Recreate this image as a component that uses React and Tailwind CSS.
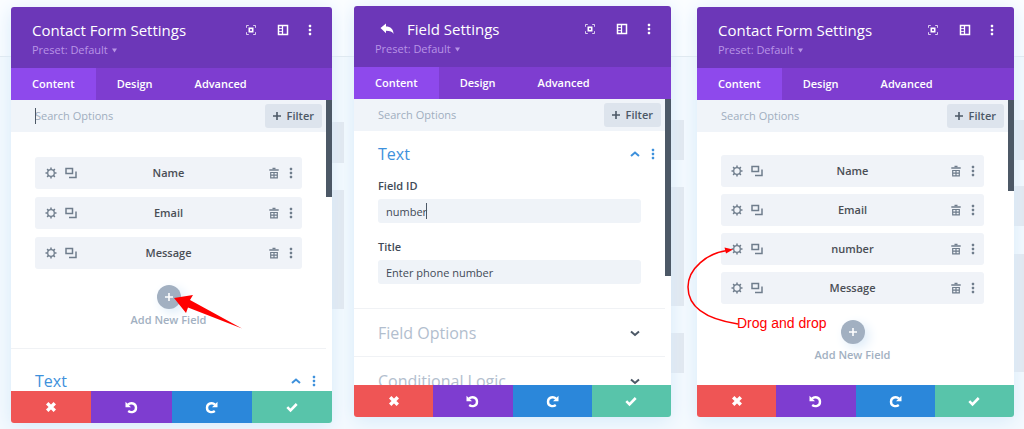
import React, { useState } from 'react';

const Dots = ({ className }) => (
  <svg className={className} viewBox="0 0 12 12" fill="currentColor">
    <rect x="4.800" y="0.800" width="2.400" height="2.400" rx="0.600" />
    <rect x="4.800" y="4.800" width="2.400" height="2.400" rx="0.600" />
    <rect x="4.800" y="8.800" width="2.400" height="2.400" rx="0.600" />
  </svg>
);

const HeaderIcons = () => (
  <div className="flex h-[22px] items-center text-white">
    <button type="button" aria-label="Expand">
      <svg className="w-3 h-3" viewBox="0 0 12 12" fill="none" stroke="currentColor">
        <path d="M1.500 3.800V1.500h2.300M8.200 1.500h2.300v2.300M10.500 8.200v2.300H8.200M3.800 10.500H1.500V8.200" strokeWidth="1" opacity="0.75" />
        <rect x="4.300" y="4.300" width="3.400" height="3.400" strokeWidth="1.600" />
      </svg>
    </button>
    <button type="button" aria-label="Dock" className="ml-5">
      <svg className="w-3 h-3" viewBox="0 0 12 12" fill="none" stroke="currentColor">
        <rect x="1.500" y="1.500" width="9" height="9" strokeWidth="1.500" />
        <path d="M5.500 1.500v9" strokeWidth="1.300" />
        <path d="M1.500 4.500h4M1.500 7.500h4" strokeWidth="0.800" />
      </svg>
    </button>
    <button type="button" aria-label="More" className="ml-[15px]">
      <Dots className="w-3 h-3" />
    </button>
  </div>
);

const Gear = () => (
  <svg className="w-3 h-3" viewBox="0 0 12 12" fill="none" stroke="currentColor">
    <circle cx="6" cy="6" r="3.300" strokeWidth="1.300" />
    <path d="M6 0.500v2M6 9.500v2M0.500 6h2M9.500 6h2M2.100 2.100l1.400 1.400M8.500 8.500l1.400 1.400M9.900 2.100L8.500 3.500M3.500 8.500L2.100 9.900" strokeWidth="1.500" />
  </svg>
);

const Duplicate = () => (
  <svg className="w-3 h-3" viewBox="0 0 12 12" fill="none" stroke="currentColor" strokeWidth="1.500">
    <rect x="1" y="1.500" width="6.500" height="5" />
    <path d="M11 4.500v6H4" />
  </svg>
);

const Trash = () => (
  <svg className="w-3 h-3" viewBox="0 0 12 12" fill="none" stroke="currentColor">
    <path d="M1.300 3h9.400" strokeWidth="1.500" />
    <path d="M4.500 1.500h3" strokeWidth="1.500" />
    <path d="M2.700 5.500h6.600v5.400H2.700zM6 5.500v5.400M2.700 8.200h6.600" strokeWidth="1.200" />
  </svg>
);

const Chevron = ({ up }) => (
  <svg className="w-3 h-3" viewBox="0 0 12 12" fill="none" stroke="currentColor" strokeWidth="2">
    {up ? <path d="M2 8l4-3.500L10 8" /> : <path d="M2 4.500L6 8l4-3.500" />}
  </svg>
);

const Plus = ({ className }) => (
  <svg className={className} viewBox="0 0 8 8" fill="none" stroke="currentColor" strokeWidth="1.600">
    <path d="M4 0v8M0 4h8" />
  </svg>
);

const Turn = ({ className = '' }) => (
  <svg className={`w-[13px] h-[13px] ${className}`} viewBox="0 0 13 13">
    <path d="M3 3.600C5.500 1.300 11 2 11 6.700c0 4.600-5 5.400-7.800 3.300" fill="none" stroke="currentColor" strokeWidth="2.400" />
    <path d="M0.500 0.800l5.500 5.400H0.500z" fill="currentColor" />
  </svg>
);

// Wireframe of the page that lies behind each modal
const Backdrop = ({ blocks }) => (
  <div className="col-start-1 row-start-1 bg-[#f5fafe]" aria-hidden="true">
    <div className="h-[57px] border-b border-[#e2e9ef] bg-[#fbfdff]" />
    {blocks.map(([gap, height], i) => (
      <div key={i} className="ml-auto w-1/2 bg-[#e3e8ef]" style={{ marginTop: gap, height }} />
    ))}
  </div>
);

const Header = ({ title, back }) => (
  <header className="flex h-[61px] justify-between bg-[#6c37b8] pt-3 pr-4 pl-[21px]">
    <div>
      <h2 className="flex h-[22px] items-center text-[15px] font-medium text-white">
        {back && (
          <button type="button" aria-label="Back" className="mr-3 ml-1">
            <svg className="w-4 h-4" viewBox="0 0 16 16" fill="currentColor">
              <path d="M1.500 7L7 2.500v3c4.500 0 7.500 2.500 7.500 7.500-1-2.300-3.500-3.300-7.500-3.300v2.500z" />
            </svg>
          </button>
        )}
        {title}
      </h2>
      <button type="button" className="flex h-[18px] items-center gap-1 text-[11px] text-[#b894e6]">
        Preset: Default
        <svg className="w-[5px] h-[5px]" viewBox="0 0 5 5" fill="currentColor"><path d="M0 0.500h5L2.500 4.500z" /></svg>
      </button>
    </div>
    <HeaderIcons />
  </header>
);

const Tabs = () => (
  <nav className="flex h-8 bg-[#7e3dd0] text-[11px] font-semibold text-white">
    <button type="button" className="bg-[#8e49ec] px-[21px]">Content</button>
    <button type="button" className="px-[21px]">Design</button>
    <button type="button" className="px-[21px]">Advanced</button>
  </nav>
);

const Search = ({ caret }) => (
  <div className="flex h-8 items-center bg-[#f0f4f9] pr-1 pl-6">
    <div className="relative flex min-w-0 flex-1">
      {caret && <span className="absolute left-0 h-4 w-px bg-[#4c5866]" />}
      <input
        type="text"
        aria-label="Search Options"
        placeholder="Search Options"
        className="h-4 w-full bg-transparent text-[11px] font-medium outline-none placeholder:text-[#a0aebf]"
      />
    </div>
    <button type="button" className="flex h-6 items-center gap-[6px] rounded-[3px] bg-[#dde4ed] px-2 text-[11px] font-semibold text-[#4c5866]">
      <Plus className="w-2 h-2" />
      Filter
    </button>
  </div>
);

const Footer = () => (
  <footer className="grid h-8 grid-cols-4 text-white">
    <button type="button" aria-label="Discard" className="flex items-center justify-center bg-[#ef5555]">
      <svg className="w-3 h-3" viewBox="0 0 12 12" fill="none" stroke="currentColor" strokeWidth="3.400">
        <path d="M2.200 2.200l7.600 7.600M9.800 2.200L2.200 9.800" />
      </svg>
    </button>
    <button type="button" aria-label="Undo" className="flex items-center justify-center bg-[#7e3dd0]">
      <Turn />
    </button>
    <button type="button" aria-label="Redo" className="flex items-center justify-center bg-[#2b87da]">
      <Turn className="-scale-x-100" />
    </button>
    <button type="button" aria-label="Save" className="flex items-center justify-center bg-[#58c4aa]">
      <svg className="w-3 h-3" viewBox="0 0 12 12" fill="none" stroke="currentColor" strokeWidth="2.600">
        <path d="M1.300 6.200l3.200 3.200 6.200-6.400" />
      </svg>
    </button>
  </footer>
);

const Panel = ({ title, back, caret, thumb, children }) => (
  <section className="flex min-w-0 flex-col overflow-hidden rounded-[3px] bg-white shadow-[0_4px_20px_#d6eafa]">
    <Header title={title} back={back} />
    <Tabs />
    <div className="flex flex-1">
      <div className="flex min-w-0 flex-1 flex-col">
        <Search caret={caret} />
        {children}
      </div>
      <div className="w-[6px]">
        <div className={`bg-[#4c5866] ${thumb}`} />
      </div>
    </div>
    <Footer />
  </section>
);

const FieldRow = ({ name }) => (
  <li className="flex h-8 items-center rounded-[3px] bg-[#f0f3f8] pr-[5px] pl-[10px] text-[#6f7d8c]">
    <button type="button" aria-label={`${name} settings`}><Gear /></button>
    <button type="button" aria-label={`Duplicate ${name}`} className="ml-2"><Duplicate /></button>
    <span className="flex-1 pr-2 text-center text-[11px] font-semibold text-[#4a4e55]">{name}</span>
    <button type="button" aria-label={`Delete ${name}`} className="mr-[5px]"><Trash /></button>
    <button type="button" aria-label={`${name} menu`}><Dots className="w-3 h-3" /></button>
  </li>
);

const AddField = () => (
  <button type="button" className="flex w-full flex-col items-center gap-[3px] text-[11px] leading-4 font-semibold text-[#a2b0c1]">
    <span className="flex h-6 w-6 items-center justify-center rounded-full bg-[#a2b0c1] text-white shadow-[4px_4px_12px_#dcebf8]">
      <Plus className="w-2 h-2" />
    </span>
    Add New Field
  </button>
);

const OpenHeading = ({ children }) => (
  <div className="flex items-center pr-[6px] pl-6 text-[#3e91dc]">
    <h3 className="flex-1 text-base leading-4">{children}</h3>
    <Chevron up />
    <Dots className="ml-[6px] w-3 h-3" />
  </div>
);

const TextField = ({ id, label, value, onChange, caret }) => (
  <div className="px-6">
    <label htmlFor={id} className="block text-[11px] leading-4 font-semibold text-[#3f4a57]">{label}</label>
    <div className="relative mt-[5px]">
      <input
        id={id}
        type="text"
        value={value}
        onChange={onChange}
        className="block h-6 w-full rounded-[3px] bg-[#eff3f8] px-2 text-[11px] font-medium text-[#3f4a57] outline-none"
      />
      {caret && <span className="absolute top-1 left-12 h-4 w-px bg-[#4c5866]" />}
    </div>
  </div>
);

const ClosedHeading = ({ children }) => (
  <div className="flex h-12 shrink-0 items-center border-t border-[#f0f2f5] px-6">
    <h3 className="flex-1 text-base text-[#b2bece]">{children}</h3>
    <span className="text-[#4c5866]"><Chevron /></span>
  </div>
);

const App = () => {
  const [fieldId, setFieldId] = useState('number');
  const [fieldTitle, setFieldTitle] = useState('Enter phone number');

  return (
    <main className="grid min-h-[429px] grid-cols-[344fr_340fr_340fr] overflow-hidden bg-[#f5fafe] font-['Open_Sans',sans-serif]">
      <div className="grid overflow-hidden">
        <Backdrop blocks={[[65, 41], [27, 119]]} />
        <div className="relative col-start-1 row-start-1 grid pt-[7px] pr-3 pb-[7px] pl-[11px]">
          <Panel title="Contact Form Settings" caret thumb="h-[97px]">
            <div className="flex h-[258px] flex-col overflow-hidden">
              <ul className="flex flex-col gap-2 px-6 pt-[25px]">
                <FieldRow name="Name" />
                <FieldRow name="Email" />
                <FieldRow name="Message" />
              </ul>
              <div className="px-6 pt-4 pb-5"><AddField /></div>
              <div className="border-t border-[#f0f2f5] pt-6">
                <OpenHeading>Text</OpenHeading>
              </div>
            </div>
          </Panel>
          <svg className="absolute top-[294px] left-[173px] h-9 w-[70px]" viewBox="0 0 70 36" fill="#ff0000" aria-hidden="true">
            <path d="M1 4L20 1l-3 5 52 28.500L15 13.500l-2 5.500z" />
          </svg>
        </div>
      </div>

      <div className="grid overflow-hidden">
        <Backdrop blocks={[[63, 40], [27, 119], [27, 40]]} />
        <div className="col-start-1 row-start-1 grid pt-[6px] pr-[13px] pb-[13px] pl-[10px]">
          <Panel title="Field Settings" back thumb="h-[177px]">
            <div className="flex h-[254px] flex-col overflow-hidden">
              <div className="flex flex-col gap-4 pt-[15px] pb-6">
                <OpenHeading>Text</OpenHeading>
                <TextField id="field-id" label="Field ID" value={fieldId} onChange={(e) => setFieldId(e.target.value)} caret />
                <TextField id="field-title" label="Title" value={fieldTitle} onChange={(e) => setFieldTitle(e.target.value)} />
              </div>
              <ClosedHeading>Field Options</ClosedHeading>
              <ClosedHeading>Conditional Logic</ClosedHeading>
            </div>
          </Panel>
        </div>
      </div>

      <div className="grid overflow-hidden">
        <Backdrop blocks={[[63, 40], [26, 40], [28, 118]]} />
        <div className="relative col-start-1 row-start-1 grid pt-[7px] pr-[10px] pb-[13px] pl-[13px]">
          <Panel title="Contact Form Settings" thumb="h-[91px]">
            <ul className="flex flex-col gap-[7px] px-6 pt-[23px]">
              <FieldRow name="Name" />
              <FieldRow name="Email" />
              <FieldRow name="number" />
              <FieldRow name="Message" />
            </ul>
            <div className="px-6 pt-4"><AddField /></div>
          </Panel>
          <svg className="absolute top-[244px] left-0 h-[84px] w-14" viewBox="0 0 56 84" aria-hidden="true">
            <path d="M54 80C28 76 4 66 4 43C4 24 24 9 43 6.500" fill="none" stroke="#ff0000" strokeWidth="1.500" />
            <path d="M49 5.500L40.500 3.500l1.500 6z" fill="#ff0000" />
          </svg>
          <p className="absolute top-[313px] left-[53px] font-['Liberation_Sans',sans-serif] text-sm text-[#ff0000]">Drog and drop</p>
        </div>
      </div>
    </main>
  );
};

export default App;
